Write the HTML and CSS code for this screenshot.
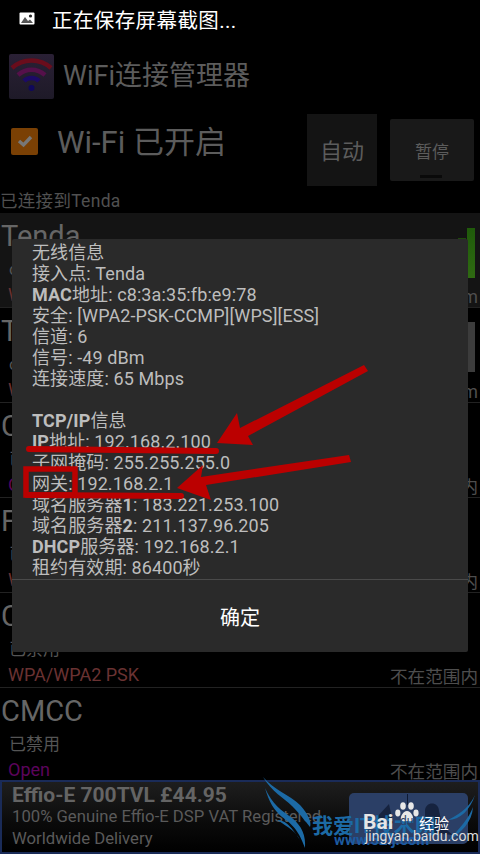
FILE: index.html
```html
<!DOCTYPE html>
<html lang="zh-CN">
<head>
    <meta charset="utf-8">
    <title>WiFi连接管理器</title>
    <link rel="stylesheet" href="styles.css">
</head>
<body>
    <div class="screen">
        <div class="status-bar">
            <svg class="status-icon" width="16" height="14" viewBox="0 0 16 14">
                <rect x="0.5" y="0.5" width="15" height="12" rx="1" fill="#fff"/>
                <circle cx="11.5" cy="4" r="1.6" fill="#222"/>
                <path d="M2 11 L6 5 L9 9 L11 7.5 L14 11 Z" fill="#555"/>
            </svg>
            <span>正在保存屏幕截图...</span>
        </div>

        <div class="app-title">
            <div class="app-icon">
                <svg width="45" height="45" viewBox="0 0 45 45" fill="none">
                    <path d="M3 14 C14 4 31 4 42 14" stroke="#6a0d1c" stroke-width="4.5"/>
                    <path d="M9 21 C17 14 28 14 36 21" stroke="#55104a" stroke-width="4.5"/>
                    <path d="M15 27 C19 23 26 23 30 27" stroke="#1c0a66" stroke-width="4.5"/>
                    <circle cx="22.5" cy="34" r="3" fill="#10085c"/>
                </svg>
            </div>
            <span class="app-name">WiFi连接管理器</span>
        </div>

        <div class="toggle-row">
            <div class="check">
                <svg width="16" height="14" viewBox="0 0 16 14" fill="none">
                    <path d="M2 7 L6.5 11 L14 3" stroke="#777" stroke-width="3.4"/>
                </svg>
            </div>
            <span class="toggle-label">Wi-Fi 已开启</span>
            <div class="btn-auto">自动</div>
            <div class="btn-pause">暂停<i class="btn-led"></i></div>
        </div>

        <div class="conn-status">已连接到Tenda</div>

        <div class="net net-active">
            <div class="net-name">Tenda</div>
            <div class="net-state">connected</div>
            <div class="net-foot"><span class="sec-red">WPA2 PSK</span><span class="net-right">-49 dBm</span></div>
            <i class="bar-small"></i><i class="bar-green"></i>
        </div>
        <div class="net">
            <div class="net-name">Tenda_2</div>
            <div class="net-state">connected</div>
            <div class="net-foot"><span class="sec-red">WPA2 PSK</span><span class="net-right">-72 dBm</span></div>
            <i class="bar-gray"></i>
        </div>
        <div class="net">
            <div class="net-name">ChinaNet</div>
            <div class="net-state">已禁用</div>
            <div class="net-foot"><span class="sec-purple">Open</span><span class="net-right">不在范围内</span></div>
        </div>
        <div class="net">
            <div class="net-name">FAST</div>
            <div class="net-state">已禁用</div>
            <div class="net-foot"><span class="sec-red">WPA/WPA2 PSK</span><span class="net-right">不在范围内</span></div>
        </div>
        <div class="net">
            <div class="net-name">CMCC</div>
            <div class="net-state">已禁用</div>
            <div class="net-foot"><span class="sec-red">WPA/WPA2 PSK</span><span class="net-right">不在范围内</span></div>
        </div>
        <div class="net net-last">
            <div class="net-name">CMCC</div>
            <div class="net-state">已禁用</div>
            <div class="net-foot"><span class="sec-purple">Open</span><span class="net-right">不在范围内</span></div>
        </div>

        <div class="ad">
            <div class="ad-title">Effio-E 700TVL £44.95</div>
            <div class="ad-line">100% Genuine Effio-E DSP VAT Registered</div>
            <div class="ad-line">Worldwide Delivery</div>
            <div class="ad-btn">
                <svg width="119" height="51" viewBox="0 0 119 51" fill="#16233f">
                    <path d="M28 24 L40 11 L44 30 L30 36 Z"/>
                    <path d="M76 18 C76 8 90 8 90 18 L94 34 L104 42 L84 40 L76 30 Z"/>
                    <rect x="58" y="1" width="1" height="11" fill="#0e1a33"/>
                </svg>
            </div>
        </div>

        <div class="dialog">
            <div class="dialog-body">
                <div>无线信息</div>
                <div>接入点: Tenda</div>
                <div><b>MAC</b>地址: c8:3a:35:fb:e9:78</div>
                <div>安全: [WPA2-PSK-CCMP][WPS][ESS]</div>
                <div>信道: 6</div>
                <div>信号: -49 dBm</div>
                <div>连接速度: 65 Mbps</div>
                <div class="blank">&nbsp;</div>
                <div><b>TCP/IP</b>信息</div>
                <div><b>IP</b>地址: 192.168.2.100</div>
                <div>子网掩码: 255.255.255.0</div>
                <div>网关: 192.168.2.1</div>
                <div>域名服务器<b>1</b>: 183.221.253.100</div>
                <div>域名服务器<b>2</b>: 211.137.96.205</div>
                <div><b>DHCP</b>服务器: 192.168.2.1</div>
                <div>租约有效期: 86400秒</div>
            </div>
            <div class="dialog-btn">确定</div>
        </div>

        <!-- red marks drawn on the screenshot -->
        <svg class="marks" width="480" height="854" viewBox="0 0 480 854">
            <g fill="#bb0000" stroke="none">
                <path d="M364 365 L368 371 L248 436 L253 445 L217 443 L237 413 L240 428 Z"/>
                <path d="M349 455 L351 462 L206 485 L211 500 L177 488 L203 465 L201 477 Z"/>
            </g>
            <g fill="none" stroke="#bb0000" stroke-linecap="round">
                <path d="M29 449 L216 451" stroke-width="6"/>
                <path d="M27 495 L181 496" stroke-width="6"/>
                <path d="M26 469 L75 469 L75 495 L26 495 Z" stroke-width="5.5" stroke-linecap="butt"/>
            </g>
        </svg>

        <!-- watermark in the corner -->
        <div class="watermark">
            <svg class="wings" width="216" height="78" viewBox="0 0 216 78" fill="#1c6aa5">
                <path d="M-1 1 C8 16 20 22 28 30 C36 38 42 46 46 51 C48 46 44 38 36 29 C26 19 10 14 -1 1 Z"/>
                <path d="M1 12 C5 26 10 34 18 41 C26 47 34 52 41 72 C42 60 38 50 28 42 C18 35 8 28 1 12 Z"/>
                <path d="M13 44 C20 44 26 48 36 64 C32 56 26 52 13 44 Z"/>
                <path d="M211 19 C207 28 200 36 184 44 C196 44 206 34 211 19 Z"/>
                <path d="M209 31 C205 42 196 52 183 66 C198 56 208 46 209 31 Z"/>
            </svg>
            <span class="wm-it">我爱IT技术网</span>
            <span class="wm-url">www.52ij.com</span>
            <span class="wm-bai">Bai</span>
            <svg class="paw" width="24" height="20" viewBox="0 0 24 20" fill="#e8e8e8">
                <ellipse cx="8" cy="4" rx="2.8" ry="3.8"/>
                <ellipse cx="16" cy="4" rx="2.8" ry="3.8"/>
                <ellipse cx="2.8" cy="11" rx="2.6" ry="3.4"/>
                <ellipse cx="21" cy="11" rx="2.6" ry="3.4"/>
                <path d="M12 9 C8 9 5 15 6 18 C8 20 10 19 12 19 C14 19 16 20 18 18 C19 15 16 9 12 9 Z"/>
            </svg>
            <span class="wm-du">du</span>
            <span class="wm-jy">经验</span>
            <span class="wm-site">jingyan.baidu.com</span>
        </div>
    </div>
</body>
</html>
```

FILE: styles.css
```css
* {
    box-sizing: border-box;
}

body {
    margin: 0;
    background: #000;
    font-family: Roboto, "Noto Sans CJK SC", sans-serif;
}

.screen {
    position: relative;
    width: 480px;
    height: 854px;
    overflow: hidden;
    background: #000;
    display: flex;
    flex-direction: column;
}

.status-bar {
    height: 38px;
    flex: none;
    padding-left: 19px;
    display: flex;
    align-items: center;
    gap: 17px;
    color: #fff;
    font-size: 20.5px;
    letter-spacing: 0.4px;
}

.status-icon {
    flex: none;
}

.app-title {
    height: 76px;
    flex: none;
    padding-left: 9px;
    display: flex;
    align-items: center;
    gap: 9px;
    color: #5c5c5c;
    font-size: 27px;
}

.app-name {
    margin-bottom: 6px;
}

.app-icon {
    width: 45px;
    height: 45px;
    border-radius: 2px;
    background: linear-gradient(#2a2035, #1e1a28);
}

.toggle-row {
    height: 72px;
    flex: none;
    padding-left: 11px;
    display: flex;
    align-items: center;
    color: #5c5c5c;
}

.check {
    width: 27px;
    height: 27px;
    margin-bottom: 18px;
    border-radius: 2px;
    background: #7a4004;
    display: flex;
    align-items: center;
    justify-content: center;
}

.toggle-label {
    margin-left: 19px;
    margin-bottom: 22px;
    width: 250px;
    font-size: 31px;
}

.btn-auto {
    width: 70px;
    height: 72px;
    padding-bottom: 3px;
    background: #141414;
    display: flex;
    align-items: center;
    justify-content: center;
    font-size: 22px;
}

.btn-pause {
    position: relative;
    width: 84px;
    height: 62px;
    margin-left: 13px;
    background: #191919;
    border-radius: 2px;
    display: flex;
    align-items: center;
    justify-content: center;
    font-size: 17px;
}

.btn-led {
    position: absolute;
    left: 30px;
    bottom: 3px;
    width: 22px;
    height: 3px;
    background: #0a0a0a;
}

.conn-status {
    height: 27px;
    flex: none;
    padding-top: 3px;
    color: #505050;
    font-size: 17.5px;
    line-height: 24px;
    letter-spacing: 0.3px;
}

.net {
    position: relative;
    height: 95px;
    flex: none;
    border-bottom: 1px solid #222;
    color: #555;
}

.net-active {
    background: #141414;
}

.net-last {
    border-bottom: none;
    height: 92px;
}

.net-name {
    height: 44px;
    padding-left: 1px;
    font-size: 29px;
    line-height: 46px;
    color: #666;
}

.net-state {
    height: 24px;
    padding-left: 9px;
    font-size: 17px;
    line-height: 24px;
}

.net-foot {
    padding: 0 2px 0 8px;
    display: flex;
    justify-content: space-between;
    font-size: 18px;
    line-height: 28px;
}

.net-right {
    font-size: 17.6px;
    color: #4e4e4e;
    padding-top: 2px;
}

.sec-red {
    color: #6a3232;
}

.sec-purple {
    color: #5c045c;
}

.bar-green {
    position: absolute;
    right: 5px;
    top: 15px;
    width: 8px;
    height: 50px;
    background: linear-gradient(#1f5a0a, #2f6a12);
}

.bar-small {
    position: absolute;
    right: 14px;
    top: 25px;
    width: 8px;
    height: 40px;
    background: #1f4a0c;
}

.bar-gray {
    position: absolute;
    right: 5px;
    top: 14px;
    width: 8px;
    height: 50px;
    background: #3c3c3c;
}

.ad {
    position: relative;
    flex: 1;
    border: 2px solid #1a2b58;
    padding: 0 0 0 10px;
    background: linear-gradient(#1e1e1e, #0a0a0a 60%, #000);
    color: #5a5a5a;
}

.ad-title {
    height: 24px;
    font-size: 21px;
    font-weight: bold;
    line-height: 26px;
    color: #646464;
}

.ad-line {
    font-size: 16.7px;
    line-height: 21.5px;
}

.ad-btn {
    position: absolute;
    top: 11px;
    right: 10px;
    width: 119px;
    height: 51px;
    border-radius: 5px;
    background: #2b3f66;
}

.dialog {
    position: absolute;
    left: 12px;
    top: 239px;
    width: 456px;
    height: 413px;
    background: #2a2a2a;
    border-radius: 2px;
    display: flex;
    flex-direction: column;
}

.dialog-body {
    height: 341px;
    flex: none;
    padding: 3px 0 0 20px;
    border-bottom: 1px solid #4a4a4a;
    color: #bdbdbd;
    font-size: 18px;
    line-height: 21px;
    letter-spacing: 0.1px;
}

.dialog-btn {
    flex: 1;
    display: flex;
    align-items: center;
    justify-content: center;
    color: #fff;
    font-size: 20px;
}

.marks {
    position: absolute;
    left: 0;
    top: 0;
}

.watermark {
    position: absolute;
    left: 264px;
    top: 776px;
    width: 216px;
    height: 78px;
}

.wings {
    position: absolute;
    left: 0;
    top: 0;
    overflow: visible;
}

.watermark span {
    position: absolute;
    white-space: nowrap;
}

.wm-it {
    left: 48px;
    top: 33px;
    color: #1c6aa5;
    font-size: 21px;
    font-weight: bold;
}

.wm-url {
    left: 70px;
    top: 55px;
    color: #1c5aa0;
    font-size: 15px;
    font-weight: bold;
}

.wm-bai {
    left: 99px;
    top: 34px;
    color: #e6e6e6;
    font-size: 21px;
    font-weight: bold;
}

.paw {
    position: absolute;
    left: 131px;
    top: 26px;
}

.wm-du {
    left: 136px;
    top: 38px;
    color: #2b3f66;
    font-size: 12px;
}

.wm-jy {
    left: 155px;
    top: 36px;
    color: #fff;
    font-size: 15px;
}

.wm-site {
    left: 101px;
    top: 52px;
    color: #ddd;
    font-size: 14px;
}
```
